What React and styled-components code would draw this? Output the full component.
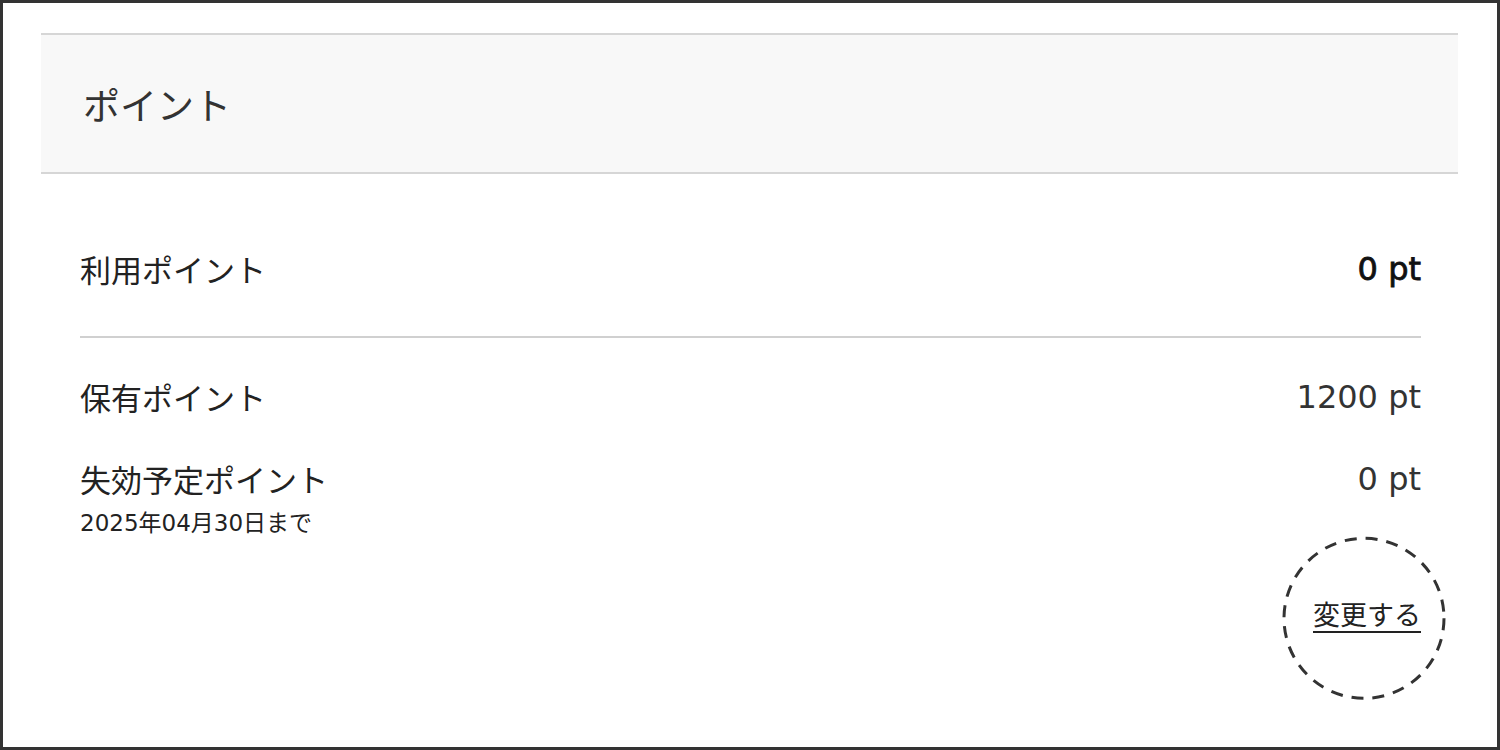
import React from "react"
import styled, { createGlobalStyle } from "styled-components"

const GlobalStyle = createGlobalStyle`
  html, body {
    margin: 0;
    padding: 0;
    background: #fff;
  }
  body {
    font-family: "Noto Sans CJK JP", "Noto Sans", sans-serif;
    color: #222;
  }
`

const Frame = styled.div`
  box-sizing: border-box;
  width: 1500px;
  height: 750px;
  border: 3px solid #333;
  padding: 30px 39px 0 38px;
  overflow: hidden;
`

const Header = styled.div`
  display: flex;
  align-items: center;
  height: 137px;
  padding: 0 42px;
  background: #f8f8f8;
  border-top: 2px solid #d6d6d6;
  border-bottom: 2px solid #d6d6d6;
`

const Title = styled.h2`
  margin: 0;
  font-size: 37px;
  font-weight: 400;
  color: #333;
`

const Body = styled.div`
  padding: 75px 37px 0 39px;
`

const Row = styled.div`
  display: flex;
  justify-content: space-between;
  align-items: flex-start;
  margin-top: ${(p) => p.$gap || 0}px;
`

const LabelBlock = styled.div`
  display: flex;
  flex-direction: column;
`

const Label = styled.span`
  font-size: 31px;
  line-height: 40px;
  color: #222;
`

const Note = styled.span`
  margin-top: 9px;
  font-family: "DejaVu Sans", "Noto Sans CJK JP", sans-serif;
  font-size: 23px;
  line-height: 30px;
  color: #222;
`

const Value = styled.span`
  font-family: "DejaVu Sans", "Noto Sans CJK JP", sans-serif;
  font-size: 32px;
  line-height: 40px;
  font-weight: 400;
  color: ${(p) => (p.$strong ? "#111" : "#333")};
  -webkit-text-stroke: ${(p) => (p.$strong ? "0.8px #111" : "0")};
`

const Divider = styled.hr`
  margin: 47px 0 0;
  border: 0;
  height: 2px;
  background: #d0d0d0;
`

const Actions = styled.div`
  display: flex;
  justify-content: flex-end;
  margin-top: 59px;
`

const LinkWrap = styled.div`
  position: relative;
`

const ChangeLink = styled.a`
  display: block;
  font-size: 27px;
  line-height: 34px;
  color: #222;
  text-decoration: none;
  border-bottom: 2px solid #222;
  cursor: pointer;
`

const Ring = styled.svg`
  position: absolute;
  left: 50%;
  top: 50%;
  width: 166px;
  height: 166px;
  transform: translate(calc(-50% - 3px), -48%);
  pointer-events: none;
`

export default function App() {
  return (
    <>
      <GlobalStyle />
      <Frame>
        <Header>
          <Title>ポイント</Title>
        </Header>
        <Body>
          <Row>
            <Label>利用ポイント</Label>
            <Value $strong>0 pt</Value>
          </Row>
          <Divider />
          <Row $gap={39}>
            <Label>保有ポイント</Label>
            <Value>1200 pt</Value>
          </Row>
          <Row $gap={42}>
            <LabelBlock>
              <Label>失効予定ポイント</Label>
              <Note>2025年04月30日まで</Note>
            </LabelBlock>
            <Value>0 pt</Value>
          </Row>
          <Actions>
            <LinkWrap>
              <ChangeLink>変更する</ChangeLink>
              <Ring viewBox="0 0 166 166">
                <circle
                  cx="83"
                  cy="83"
                  r="80"
                  fill="none"
                  stroke="#333"
                  strokeWidth="3"
                  strokeDasharray="12 9"
                />
              </Ring>
            </LinkWrap>
          </Actions>
        </Body>
      </Frame>
    </>
  )
}
